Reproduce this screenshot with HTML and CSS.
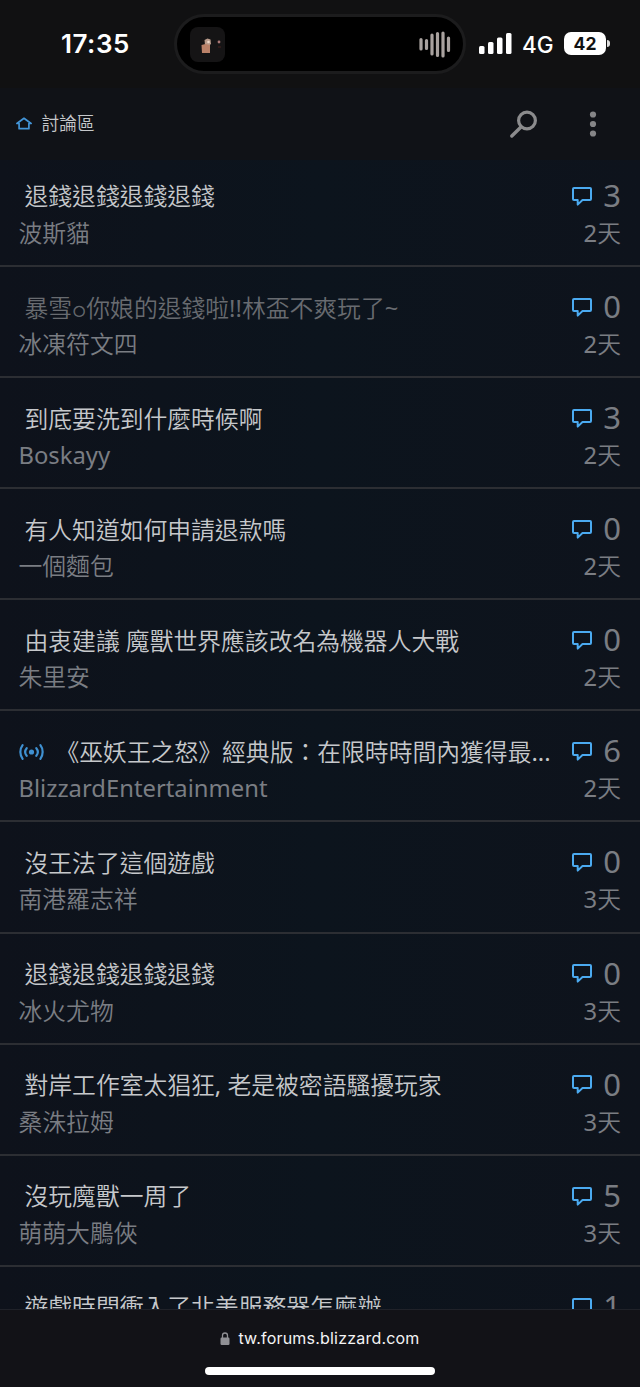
FILE: index.html
```html
<!DOCTYPE html>
<html lang="zh-Hant">
<head>
<meta charset="utf-8">
<title>討論區</title>
<link rel="stylesheet" href="styles.css">
</head>
<body>
<svg class="defs" width="0" height="0" aria-hidden="true">
  <symbol id="bubble" viewBox="0 0 22 20"><path d="M3 2h16q1 0 1 1v10q0 1-1 1h-7.500L6.700 18.600V14H3q-1 0-1-1V3q0-1 1-1z" fill="none" stroke="currentColor" stroke-width="2" stroke-linejoin="round"/></symbol>
</svg>
<div class="phone">
  <div class="status">
    <span class="time">17:35</span>
    <div class="island">
      <svg class="cover" width="35" height="35" viewBox="0 0 35 35"><rect width="35" height="35" rx="8" fill="#151415"/><path d="M14.500 13l3-1.500 3 1 .5 4.500-2 1.500-4-.5z" fill="#b99b8b"/><path d="M11.500 18l4-1 4.500 1v8h-8z" fill="#ba8168"/><circle cx="18.500" cy="15" r="1.300" fill="#efd8c9"/><circle cx="29" cy="15" r="1.400" fill="#aa7775"/><path d="M28 20h3M12.500 14h1" stroke="#46211f"/></svg>
      <svg class="wave" width="32" height="28" viewBox="0 0 32 28" stroke="#a9a29f" stroke-width="3.200" stroke-linecap="round"><path d="M2 9.500v9.500M7.500 10.500v8M13 5v19M18.500 3.500v22M24 3v23M29.500 8v12.500"/></svg>
    </div>
    <svg class="signal" width="33" height="21" viewBox="0 0 33 21" fill="#fff"><rect x="0" y="13" width="5.500" height="8" rx="1.500"/><rect x="9" y="9" width="5.500" height="12" rx="1.500"/><rect x="18" y="4.500" width="5.500" height="16.500" rx="1.500"/><rect x="27" y="0" width="5.500" height="21" rx="1.500"/></svg>
    <span class="network">4G</span>
    <span class="battery">42</span>
    <span class="cap"></span>
  </div>
  <header class="nav">
    <svg width="16" height="14" viewBox="0 0 16 14" fill="none" stroke="#4395d8" stroke-width="1.700" stroke-linecap="round" stroke-linejoin="round"><path d="M.9 6.500L8 1.300l7.100 5.200H12.900v5.200H3.100V6.500z"/></svg>
    <span class="crumb">討論區</span>
    <svg class="search" width="29" height="29" viewBox="0 0 29 29" fill="none" stroke="#8b8b8d" stroke-linecap="round"><circle cx="18" cy="10.500" r="8.400" stroke-width="3.200"/><path d="M12 17L2.800 26" stroke-width="3.400"/></svg>
    <svg class="more" width="8" height="26" viewBox="0 0 8 26" fill="#858587"><circle cx="4" cy="3.500" r="3.100"/><circle cx="4" cy="13" r="3.100"/><circle cx="4" cy="22.500" r="3.100"/></svg>
  </header>
  <main class="viewport">
    <ul class="topics">
      <li class="topic"><div class="info"><div class="title">退錢退錢退錢退錢</div><div class="author">波斯貓</div></div><div class="meta"><div class="replies"><svg><use href="#bubble"/></svg>3</div><div class="age">2天</div></div></li>
      <li class="topic read"><div class="info"><div class="title">暴雪<span class="ring">○</span>你娘的退錢啦!!林盃不爽玩了~</div><div class="author">冰凍符文四</div></div><div class="meta"><div class="replies"><svg><use href="#bubble"/></svg>0</div><div class="age">2天</div></div></li>
      <li class="topic"><div class="info"><div class="title">到底要洗到什麼時候啊</div><div class="author">Boskayy</div></div><div class="meta"><div class="replies"><svg><use href="#bubble"/></svg>3</div><div class="age">2天</div></div></li>
      <li class="topic"><div class="info"><div class="title">有人知道如何申請退款嗎</div><div class="author">一個麵包</div></div><div class="meta"><div class="replies"><svg><use href="#bubble"/></svg>0</div><div class="age">2天</div></div></li>
      <li class="topic"><div class="info"><div class="title">由衷建議 魔獸世界應該改名為機器人大戰</div><div class="author">朱里安</div></div><div class="meta"><div class="replies"><svg><use href="#bubble"/></svg>0</div><div class="age">2天</div></div></li>
      <li class="topic live"><div class="info"><div class="title"><svg class="cast" width="25" height="18" viewBox="0 0 25 18" fill="none" stroke="#3f91d2" stroke-width="2.200" stroke-linecap="round"><circle cx="12.500" cy="9" r="2.600" fill="#3f91d2" stroke="none"/><path d="M7.700 5.200a6 6 0 0 0 0 7.600M17.300 5.200a6 6 0 0 1 0 7.600M3.600 2.200c-3 4-3 9.600 0 13.600M21.400 2.200c3 4 3 9.600 0 13.600"/></svg><span class="label">《巫妖王之怒》經典版：在限時時間內獲得最...</span></div><div class="author">BlizzardEntertainment</div></div><div class="meta"><div class="replies"><svg><use href="#bubble"/></svg>6</div><div class="age">2天</div></div></li>
      <li class="topic"><div class="info"><div class="title">沒王法了這個遊戲</div><div class="author">南港羅志祥</div></div><div class="meta"><div class="replies"><svg><use href="#bubble"/></svg>0</div><div class="age">3天</div></div></li>
      <li class="topic"><div class="info"><div class="title">退錢退錢退錢退錢</div><div class="author">冰火尤物</div></div><div class="meta"><div class="replies"><svg><use href="#bubble"/></svg>0</div><div class="age">3天</div></div></li>
      <li class="topic"><div class="info"><div class="title">對岸工作室太猖狂, 老是被密語騷擾玩家</div><div class="author">桑洙拉姆</div></div><div class="meta"><div class="replies"><svg><use href="#bubble"/></svg>0</div><div class="age">3天</div></div></li>
      <li class="topic"><div class="info"><div class="title">沒玩魔獸一周了</div><div class="author">萌萌大鵰俠</div></div><div class="meta"><div class="replies"><svg><use href="#bubble"/></svg>5</div><div class="age">3天</div></div></li>
      <li class="topic"><div class="info"><div class="title">遊戲時間衝入了北美服務器怎麼辦</div></div><div class="meta"><div class="replies"><svg><use href="#bubble"/></svg>1</div></div></li>
    </ul>
  </main>
  <footer class="browser">
    <div class="address"><svg width="10" height="13" viewBox="0 0 10 13"><rect x=".5" y="5.500" width="9" height="7.500" rx="1.200" fill="#909095"/><path d="M2.500 6V3.500a2.500 2.500 0 0 1 5 0V6" fill="none" stroke="#909095" stroke-width="1.300"/></svg><span>tw.forums.blizzard.com</span></div>
    <div class="home"></div>
  </footer>
</div>
</body>
</html>
```
FILE: styles.css
```css
* { box-sizing: border-box; }
body { margin: 0; background: #0d131c; }
.defs { display: block; }
.phone {
  display: flex; flex-direction: column; width: 640px; height: 1387px; overflow: hidden;
  font-family: "Noto Sans", "Noto Sans CJK TC DemiLight", "Noto Sans CJK TC", sans-serif; color: #c6c8cb;
}
.status {
  flex: none; height: 88px; padding-left: 61px; display: flex; align-items: center;
  background: #111112; color: #fff; font-family: Inter, sans-serif;
}
.time { width: 113px; margin-top: -2px; font-size: 26px; font-weight: 600; letter-spacing: .5px; }
.island {
  width: 292px; height: 60px; border: 3px solid #1c1c1d; border-radius: 30px; background: #000;
  display: flex; align-items: center; justify-content: space-between; padding: 0 12px 0 13px;
}
.signal { margin: -2px 0 0 13px; }
.network { margin-left: 10px; width: 42px; font-size: 22.500px; font-weight: 500; }
.battery {
  width: 42px; height: 23px; margin-top: -2px; border-radius: 7px; background: #fff; color: #111;
  font-size: 17.500px; font-weight: 700; line-height: 23px; text-align: center;
}
.cap { width: 3px; height: 7px; margin: -2px 0 0 1px; border-radius: 0 4px 4px 0; background: #ddd; }
.nav {
  flex: none; height: 72px; display: flex; align-items: center; padding: 0 43px 0 16px;
  background: #101217;
}
.crumb { margin: -2px 0 0 9.500px; flex: 1; font-size: 17.700px; line-height: 26px; }
.more { margin-left: 51px; }
.viewport { flex: 1; min-height: 0; overflow: hidden; background: linear-gradient(90deg, #0e121b, #0c141d 50%, #0e131c); }
.topics { list-style: none; margin: -4.100px 0 0; padding: 0; }
.topic {
  height: 111.100px; padding: 22.500px 19px 0; display: flex; justify-content: space-between;
  border-bottom: 2px solid #2c2e33; white-space: nowrap;
}
.title, .author, .age { font-size: 23.800px; line-height: 36.500px; height: 36.500px; }
.title { padding-left: 5.500px; }
.author, .age { color: #7a7d83; }
.author { margin-left: -.5px; }
.read .title { color: #686b70; }
.ring {
  padding: 0 1px; font-family: "DejaVu Sans", sans-serif; font-size: 14px; line-height: 1;
  vertical-align: 2px; -webkit-text-stroke: .5px currentColor;
}
.live .title { display: flex; align-items: center; padding-left: 0; }
.label { margin-left: 11.500px; }
.meta { display: flex; flex-direction: column; align-items: flex-end; }
.replies {
  display: flex; align-items: center; gap: 10px; height: 36.500px; margin-top: -1px; padding-bottom: 1px;
  color: #7a7d83; font-size: 31px; line-height: 36.500px;
}
.meta .age { margin-top: 1px; }
.replies svg { width: 22px; height: 20px; margin-top: 1px; color: #4baaf0; }
.browser {
  flex: none; height: 78px; padding-top: 17px; display: flex; flex-direction: column; align-items: center;
  border-top: 1px solid #202229; background: #121217;
}
.address {
  display: flex; align-items: center; gap: 8px; height: 22px;
  color: #f4f4f5; font-family: Inter, sans-serif; font-size: 16px; letter-spacing: .2px;
}
.home { width: 230px; height: 8px; margin-top: 18px; border-radius: 4px; background: #fff; }
```
